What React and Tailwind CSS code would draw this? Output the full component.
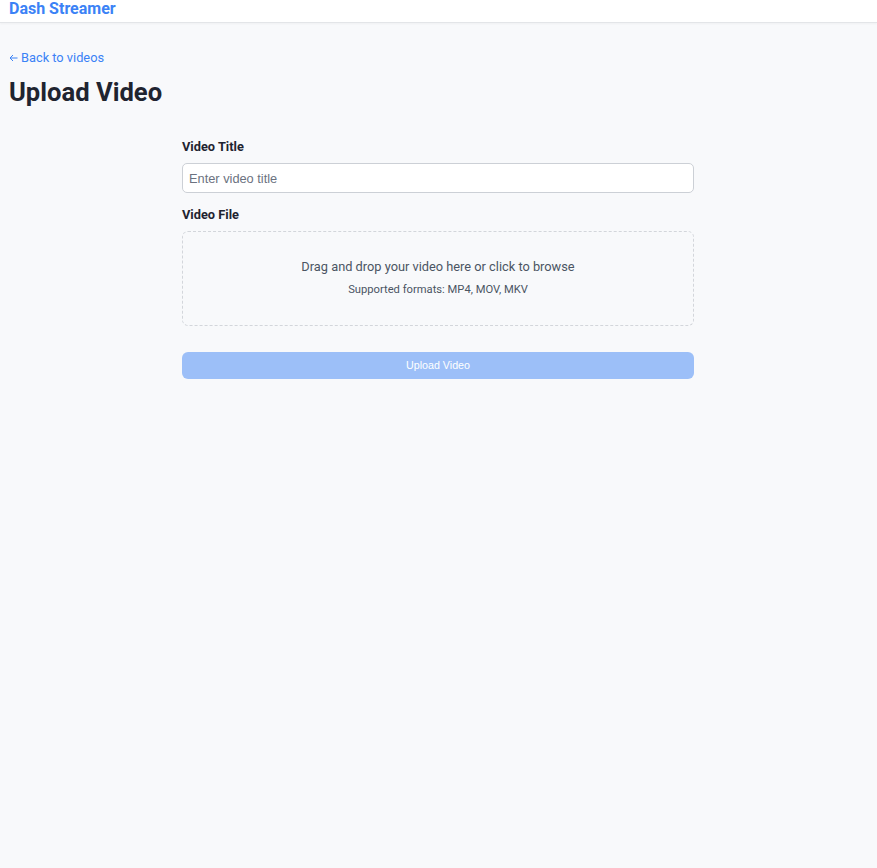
import React, { useState } from 'react';

const App = () => {
  const [title, setTitle] = useState('');

  return (
    <div className="min-h-screen bg-[#f8f9fb] font-['Roboto',sans-serif] text-[#1f2430]">
      <header className="h-[23px] bg-white border-b border-[#e3e5e8] shadow-[0_1px_2px_rgba(0,0,0,0.04)] flex items-center px-[9px]">
        <span className="text-[16px] font-bold text-[#3b82f6] leading-none -mt-[4px]">Dash Streamer</span>
      </header>

      <main className="pt-[27px]">
        <div className="px-[9px]">
          <a href="#" className="text-[12.8px] leading-[15px] text-[#3b82f6] flex items-center gap-[3px]">
            <svg width="9" height="8" viewBox="0 0 9 8" fill="none" stroke="currentColor" strokeWidth="1" className="mt-[1px]">
              <path d="M8.5 4H1M4 1L1 4l3 3" />
            </svg>
            Back to videos
          </a>
          <h1 className="mt-[12px] text-[25.6px] leading-[30px] font-bold text-[#1f2430]">Upload Video</h1>
        </div>

        <div className="pr-px">
          <form className="w-[512px] mx-auto mt-[32px]" onSubmit={(e) => e.preventDefault()}>
            <label htmlFor="title" className="block text-[12.8px] leading-[15px] font-bold text-[#1f2430]">
              Video Title
            </label>
            <input
              id="title"
              type="text"
              value={title}
              onChange={(e) => setTitle(e.target.value)}
              placeholder="Enter video title"
              className="mt-[9px] block w-full h-[30px] bg-white border border-[#ccd0d6] rounded-[5px] px-[6px] text-[12.8px] font-['Liberation_Sans',Arial,sans-serif] placeholder:text-[#6b7280] focus:outline-none"
            />

            <label className="block mt-[14px] text-[12.8px] leading-[15px] font-bold text-[#1f2430]">
              Video File
            </label>
            <div className="mt-[9px] h-[95px] border border-dashed border-[#d3d6db] rounded-[6px] flex flex-col items-center justify-center">
              <p className="text-[12.8px] leading-[16px] text-[#4b5563] -mt-[2px]">
                Drag and drop your video here or click to browse
              </p>
              <p className="mt-[8px] text-[11.2px] leading-[13px] text-[#4b5563]">Supported formats: MP4, MOV, MKV</p>
            </div>

            <button
              type="submit"
              disabled
              className="mt-[26px] w-full h-[27px] rounded-[6px] bg-[#9cbff8] text-white text-[10.7px] font-['Liberation_Sans',Arial,sans-serif]"
            >
              Upload Video
            </button>
          </form>
        </div>
      </main>
    </div>
  );
};

export default App;
